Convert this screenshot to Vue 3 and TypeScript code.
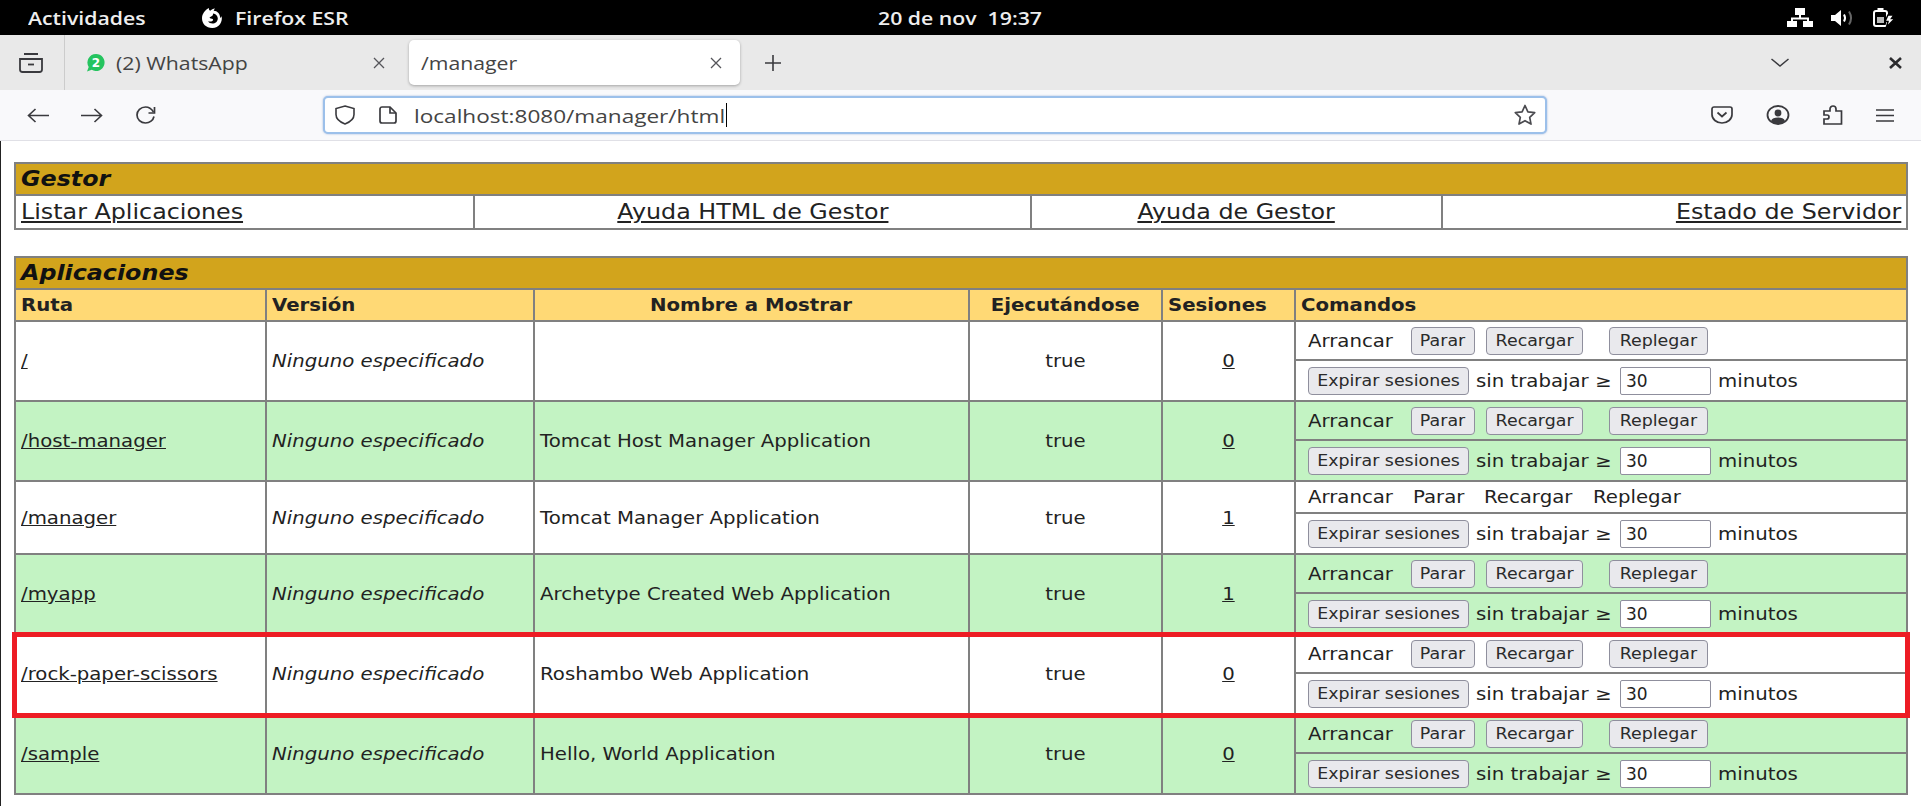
<template>
  <div class="screen">
    <header class="topbar">
      <span class="activities"><span class="w">Actividades</span></span>
      <span class="app">
        <svg width="24" height="20" viewBox="0 0 24 20">
          <path fill="#fff" d="M9 0c-.4 1.400.2 2.300 1.200 2.800C11.500 1.500 13 .7 15 .5c-.8.8-1.200 1.500-1.300 2.300 3.800.2 6 3 6.300 5.700.3 2.200 1 1.200 1.500-.5 1.600 5.800-2.500 12-9.200 12C6 20 2 15.500 2 10.200 2 6 5 2 9 0z"/>
          <path fill="#000" d="M13 5.500c3 .3 4.800 2.500 4.800 5 0 3-2.500 5-5.300 5-2 0-3.500-.8-4.500-2.200 1.500.5 3.300.4 4.300-.4.900-.7 1-1.500.4-2-.8-.6-2.700-.3-3.200-1.500 1-.6 2.400-1 3.100-1.800.4-.6.500-1.300.4-2.100z"/>
        </svg>
        <span class="w">Firefox ESR</span>
      </span>
      <span class="clock"><span class="w">20 de nov&nbsp; 19:37</span></span>
      <span class="tray">
        <svg width="26" height="19" viewBox="0 0 26 19" fill="#fff">
          <rect x="8" y="0" width="10" height="7"/>
          <rect x="0" y="13" width="10" height="6"/>
          <rect x="16" y="13" width="10" height="6"/>
          <path d="M12 7h2v2.500h8V13h-2v-1.500H6V13H4V9.500h8z"/>
        </svg>
        <svg width="24" height="16" viewBox="0 0 24 16">
          <path fill="#fff" d="M0 5h4l6-5v16l-6-5H0z"/>
          <path fill="none" stroke="#fff" stroke-width="2" d="M13 4.500c1.300 2.200 1.300 4.800 0 7"/>
          <path fill="none" stroke="#666" stroke-width="2" d="M18 1.500c2.500 4 2.500 9 0 13"/>
        </svg>
        <svg width="22" height="19" viewBox="0 0 22 19">
          <rect x="1" y="3" width="13" height="15" rx="2" fill="none" stroke="#fff" stroke-width="2"/>
          <rect x="4.500" y="0" width="6" height="2.500" fill="#fff"/>
          <rect x="4" y="9" width="7" height="6" fill="#bbb"/>
          <path fill="#fff" stroke="#000" stroke-width="1.500" d="M15 7h6l-2.500 3.500H22L13.500 19l1.500-5.500h-3z"/>
        </svg>
      </span>
    </header>

    <div class="tabbar">
      <span class="tab-list-btn">
        <svg width="24" height="20" viewBox="0 0 24 20" fill="none" stroke="#3a3a3e" stroke-width="1.800">
          <path d="M5 1h14M1 6h22v10.500a2.500 2.500 0 0 1-2.500 2.500h-17A2.500 2.500 0 0 1 1 16.500z"/>
          <path d="M9 11.500h6"/>
        </svg>
      </span>
      <div class="tab">
        <svg class="favicon" width="19" height="18" viewBox="0 0 19 18">
          <path fill="#25c45f" d="M10 0a8.500 8.500 0 1 1-4.300 15.800L1 17.500l1.700-4.600A8.500 8.500 0 0 1 10 0z"/>
          <text x="10" y="13" text-anchor="middle" font-size="12" font-weight="700" fill="#fff" font-family="DejaVu Sans, sans-serif">2</text>
        </svg>
        <span class="tab-title"><span class="w">(2) WhatsApp</span></span>
        <svg class="tab-close first" width="12" height="12" viewBox="0 0 12 12" stroke="#55555a" stroke-width="1.300"><path d="M1 1l10 10M11 1L1 11"/></svg>
      </div>
      <div class="tab active">
        <span class="tab-title"><span class="w">/manager</span></span>
        <svg class="tab-close" width="12" height="12" viewBox="0 0 12 12" stroke="#55555a" stroke-width="1.300"><path d="M1 1l10 10M11 1L1 11"/></svg>
      </div>
      <svg class="new-tab" width="18" height="18" viewBox="0 0 18 18" stroke="#3a3a3e" stroke-width="1.600"><path d="M9 1v16M1 9h16"/></svg>
      <span class="spacer"></span>
      <svg class="tabs-chevron" width="18" height="9" viewBox="0 0 18 9" fill="none" stroke="#3a3a3e" stroke-width="1.500"><path d="M.5 1l8.500 7 8.500-7"/></svg>
      <svg class="win-close" width="13" height="12" viewBox="0 0 13 12" stroke="#2b2b2e" stroke-width="2.600"><path d="M1 1l11 10M12 1L1 11"/></svg>
    </div>

    <nav class="navbar">
      <svg class="nav-btn" width="22" height="15" viewBox="0 0 22 15" fill="none" stroke="#3a3a3e" stroke-width="1.600"><path d="M22 7.500H1.500M8.500 1L1.500 7.500 8.500 14"/></svg>
      <svg class="nav-btn" width="22" height="15" viewBox="0 0 22 15" fill="none" stroke="#3a3a3e" stroke-width="1.600"><path d="M0 7.500h20.500M13.500 1l7 6.500-7 6.500"/></svg>
      <svg class="nav-btn" width="22" height="18" viewBox="0 0 22 18" fill="none" stroke="#3a3a3e" stroke-width="1.700"><path d="M19 10.500c-.8 3.700-4.300 6.500-8.500 6.500C5.700 17 2 13.400 2 9s3.700-8 8.500-8c3.500 0 5.800 1.500 8 5"/><path d="M19.500 1v6h-6"/></svg>
      <div class="urlbar">
        <svg width="22" height="20" viewBox="0 0 22 20" fill="none" stroke="#3a3a3e" stroke-width="1.600"><path d="M11 1l9 2.600v6c0 4.200-3.700 7.500-9 9.400-5.300-1.900-9-5.200-9-9.400v-6z"/></svg>
        <svg class="page-icon" width="18" height="18" viewBox="0 0 18 18" fill="none" stroke="#3a3a3e" stroke-width="1.700"><path d="M1 3a2 2 0 0 1 2-2h8l6 6v8a2 2 0 0 1-2 2H3a2 2 0 0 1-2-2z"/><path d="M11 1v6h6"/></svg>
        <span class="url">localhost:8080/manager/html</span><span class="caret"></span>
        <span class="spacer"></span>
        <svg width="24" height="24" viewBox="0 0 24 24" fill="none" stroke="#4a4a4f" stroke-width="1.700" stroke-linejoin="round"><path d="M12 2.500l2.900 6.300 6.800.8-5 4.700 1.300 6.800-6-3.400-6 3.400 1.300-6.800-5-4.700 6.800-.8z"/></svg>
      </div>
      <span class="spacer"></span>
      <div class="nav-tools">
        <svg width="22" height="18" viewBox="0 0 22 18" fill="none" stroke="#3a3a3e" stroke-width="1.700"><path d="M1 3a2 2 0 0 1 2-2h16a2 2 0 0 1 2 2v5.500c0 4.700-4.500 8.500-10 8.500S1 13.200 1 8.500z"/><path d="M6.500 6.500L11 10.500l4.500-4"/></svg>
        <svg width="24" height="20" viewBox="0 0 24 20"><ellipse cx="12" cy="10" rx="10.500" ry="9" fill="none" stroke="#3a3a3e" stroke-width="1.800"/><circle cx="12" cy="8" r="3.400" fill="#3a3a3e"/><path fill="#3a3a3e" d="M5 16c1-2.600 3.500-3.500 7-3.500s6 .9 7 3.500c-2 1.900-4.500 3-7 3s-5-1.100-7-3z"/></svg>
        <svg width="20" height="20" viewBox="0 0 20 20" fill="none" stroke="#3a3a3e" stroke-width="1.700"><path d="M1 6h6V4a3 3 0 0 1 6 0v2h5.500v13H1v-5h3a2 2 0 0 0 0-4H1z"/></svg>
        <svg width="18" height="13" viewBox="0 0 18 13" stroke="#3a3a3e" stroke-width="1.500"><path d="M0 1h18M0 6.500h18M0 12h18"/></svg>
      </div>
    </nav>

    <main class="page">
      <table class="box">
        <colgroup>
          <col style="width: 459px" />
          <col style="width: 557px" />
          <col style="width: 411px" />
          <col />
        </colgroup>
        <tbody>
          <tr class="title"><td colspan="4"><span class="w">Gestor</span></td></tr>
          <tr class="links">
            <td><a class="w">Listar Aplicaciones</a></td>
            <td class="center"><a class="w">Ayuda HTML de Gestor</a></td>
            <td class="center"><a class="w">Ayuda de Gestor</a></td>
            <td class="right"><a class="w">Estado de Servidor</a></td>
          </tr>
        </tbody>
      </table>

      <div class="apps-wrap">
        <table class="box">
          <colgroup>
            <col style="width: 251px" />
            <col style="width: 268px" />
            <col style="width: 435px" />
            <col style="width: 193px" />
            <col style="width: 133px" />
            <col />
          </colgroup>
          <tbody>
            <tr class="title"><td colspan="6"><span class="w">Aplicaciones</span></td></tr>
            <tr class="heads">
              <th class="left"><span class="w">Ruta</span></th>
              <th class="left"><span class="w">Versión</span></th>
              <th class="center"><span class="w">Nombre a Mostrar</span></th>
              <th class="center"><span class="w">Ejecutándose</span></th>
              <th class="left"><span class="w">Sesiones</span></th>
              <th class="left"><span class="w">Comandos</span></th>
            </tr>
            <template v-for="(app, i) in apps" :key="app.path">
              <tr class="cmd-top" :class="{ green: i % 2 === 1, plain: app.self }">
                <td rowspan="2"><a class="w">{{ app.path }}</a></td>
                <td rowspan="2"><em class="w">Ninguno especificado</em></td>
                <td rowspan="2"><span class="w">{{ app.name }}</span></td>
                <td rowspan="2" class="center"><span class="w">true</span></td>
                <td rowspan="2" class="center"><a class="w">{{ app.sessions }}</a></td>
                <td class="cmd">
                  <div v-if="app.self" class="plain-cmds">
                    <span><span class="w">Arrancar</span></span>
                    <span><span class="w">Parar</span></span>
                    <span><span class="w">Recargar</span></span>
                    <span><span class="w">Replegar</span></span>
                  </div>
                  <div v-else class="cmds">
                    <span class="start"><span class="w">Arrancar</span></span>
                    <button class="b-stop"><span class="w">Parar</span></button>
                    <button class="b-reload"><span class="w">Recargar</span></button>
                    <button class="b-undeploy"><span class="w">Replegar</span></button>
                  </div>
                </td>
              </tr>
              <tr class="cmd-bottom" :class="{ green: i % 2 === 1 }">
                <td class="cmd">
                  <div class="cmds expire">
                    <button class="b-expire"><span class="w">Expirar sesiones</span></button>
                    <span class="idle"><span class="w">sin trabajar ≥</span></span>
                    <input type="text" value="30" />
                    <span><span class="w">minutos</span></span>
                  </div>
                </td>
              </tr>
            </template>
          </tbody>
        </table>
        <div class="highlight"></div>
      </div>
    </main>
  </div>
</template>

<script setup lang="ts">
interface App {
  path: string
  name: string
  sessions: number
  self?: boolean
}

const apps: App[] = [
  { path: '/', name: '', sessions: 0 },
  { path: '/host-manager', name: 'Tomcat Host Manager Application', sessions: 0 },
  { path: '/manager', name: 'Tomcat Manager Application', sessions: 1, self: true },
  { path: '/myapp', name: 'Archetype Created Web Application', sessions: 1 },
  { path: '/rock-paper-scissors', name: 'Roshambo Web Application', sessions: 0 },
  { path: '/sample', name: 'Hello, World Application', sessions: 0 }
]
</script>

<style>
html, body {
  margin: 0;
  background: #fff;
}
</style>

<style scoped>
.screen {
  width: 1921px;
  height: 806px;
  overflow: hidden;
  box-sizing: border-box;
  font-family: "DejaVu Sans", sans-serif;
  color: #222;
  background: #fff;
}

/* the capture is stretched sideways, text has to follow */
.w {
  display: inline-block;
  white-space: nowrap;
  transform: scaleX(1.16);
  transform-origin: left center;
}
.center .w, button .w { transform-origin: center; }
.right .w { transform-origin: right center; }
.topbar .w, .tabbar .w { transform: scaleX(1.18); }

.topbar {
  height: 35px;
  background: #000;
  color: #eee;
  display: flex;
  align-items: center;
  font-family: "Open Sans", sans-serif;
  font-size: 18px;
  font-weight: 600;
  padding-left: 28px;
}
.activities { width: 172px; }
.app { display: flex; align-items: center; gap: 11px; width: 678px; }
.clock { width: 909px; }
.tray { display: flex; align-items: center; gap: 18px; }

.tabbar {
  height: 55px;
  background: #e9e9e9;
  display: flex;
  align-items: center;
  box-sizing: border-box;
  font-family: "Open Sans", sans-serif;
  font-size: 18px;
  color: #444;
}
.tab-list-btn {
  width: 65px;
  height: 100%;
  box-sizing: border-box;
  padding-left: 19px;
  display: flex;
  align-items: center;
  border-right: 1px solid #ccc;
}
.tab {
  width: 322px;
  height: 45px;
  margin-left: 21px;
  display: flex;
  align-items: center;
  box-sizing: border-box;
}
.tab.active {
  width: 331px;
  margin-left: 1px;
  padding-left: 12px;
  background: #fff;
  border-radius: 5px;
  box-shadow: 0 1px 3px rgba(0, 0, 0, .3);
}
.favicon { margin-right: 11px; }
.tab-title { flex: 1; }
.tab-close { margin-right: 18px; }
.tab-close.first { margin-right: 23px; }
.new-tab { margin-left: 24px; }
.spacer { flex: 1; }
.tabs-chevron { margin-right: 100px; }
.win-close { margin-right: 19px; }

.navbar {
  height: 51px;
  background: #f9f9fb;
  border-bottom: 1px solid #e0e0e6;
  box-sizing: border-box;
  display: flex;
  align-items: center;
  padding-left: 27px;
}
.nav-btn { margin-right: 32px; }
.urlbar {
  width: 1224px;
  height: 38px;
  margin-left: 134px;
  box-sizing: border-box;
  border: 2px solid #9cc0ea;
  border-radius: 5px;
  background: #fff;
  box-shadow: 0 0 2px rgba(60, 110, 190, .5);
  display: flex;
  align-items: center;
  padding: 0 8px 0 9px;
  font-family: "Open Sans", sans-serif;
  font-size: 18.500px;
  color: #444;
}
.page-icon { margin-left: 23px; margin-right: 17px; }
.url {
  width: 312px;
  white-space: nowrap;
  transform: scaleX(1.22);
  transform-origin: left center;
}
.caret {
  width: 1px;
  height: 24px;
  background: #000;
}
.nav-tools {
  display: flex;
  align-items: center;
  gap: 33px;
  margin-right: 27px;
}

.page {
  height: 665px;
  box-sizing: border-box;
  padding: 21px 13px 0 14px;
  border-left: 1px solid #222;
  font-size: 17px;
}
.page > .box { margin-left: -1px; }
.apps-wrap {
  position: relative;
  margin: 26px 0 0 -1px;
}

.box {
  width: 1894px;
  table-layout: fixed;
  border-collapse: collapse;
  border: 2px solid #808080;
}
.box td, .box th {
  border: 2px solid #808080;
  padding: 0 5px;
}
.title td {
  height: 30px;
  background: #d2a41c;
  font-weight: 700;
  font-style: italic;
  font-size: 20.500px;
  color: #111;
}
.links td { height: 32px; font-size: 20.500px; }
.center { text-align: center; }
.right { text-align: right; }
a { text-decoration: underline; }
.heads th {
  height: 30px;
  background: #ffd975;
  font-weight: 700;
  font-size: 17px;
}
.heads th.left { text-align: left; }
.green td { background: #c3f3c3; }
.box .cmd-top .cmd { height: 37px; padding: 0 12px; }
.box .cmd-top.plain .cmd { height: 30px; }
.box .cmd-bottom .cmd { height: 39px; padding: 0 12px; }
.cmds { display: flex; align-items: center; }
.start { width: 103px; }
button {
  height: 28px;
  padding: 0;
  box-sizing: border-box;
  background: #e9e9ed;
  border: 1px solid #8f8f9d;
  border-radius: 4px;
  font: inherit;
  font-size: 15px;
  color: #2b2b2b;
}
.b-stop { width: 64px; margin-right: 11px; }
.b-reload { width: 97px; margin-right: 26px; }
.b-undeploy { width: 99px; }
.b-expire { width: 161px; margin-right: 7px; }
.idle { width: 144px; }
input {
  width: 91px;
  height: 28px;
  box-sizing: border-box;
  border: 1px solid #8f8f9d;
  border-radius: 2px;
  background: #fff;
  font: inherit;
  font-size: 17px;
  padding: 0 5px;
  margin-right: 7px;
  color: #222;
}
.plain-cmds { display: flex; }
.plain-cmds > span:nth-child(1) { width: 105px; }
.plain-cmds > span:nth-child(2) { width: 71px; }
.plain-cmds > span:nth-child(3) { width: 109px; }

.highlight {
  position: absolute;
  left: -2px;
  right: -2px;
  top: 376px;
  height: 86px;
  box-sizing: border-box;
  border: 5px solid #ed1c24;
  pointer-events: none;
}
</style>
